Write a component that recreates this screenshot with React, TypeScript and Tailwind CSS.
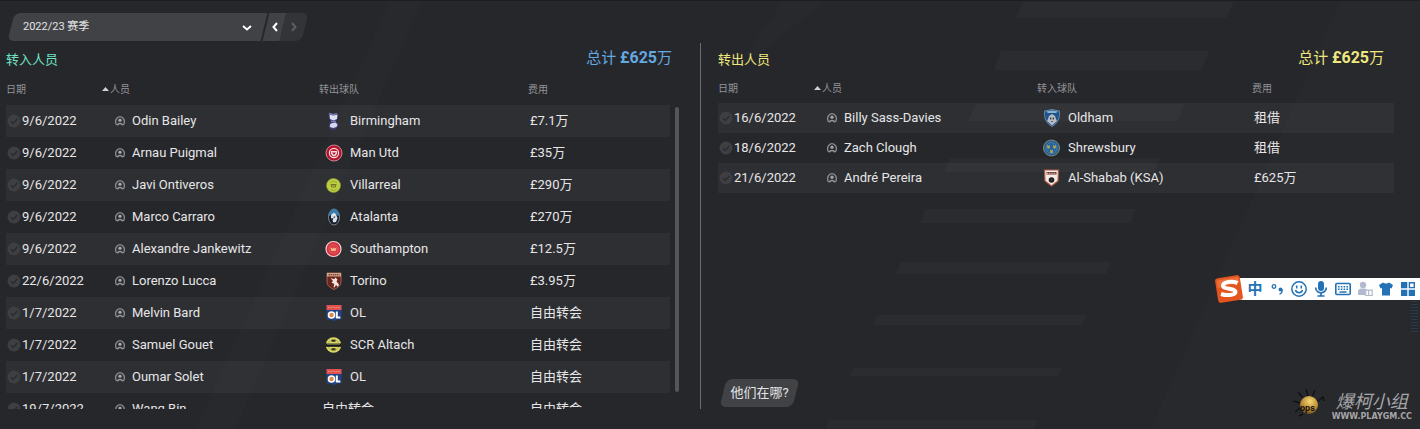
import React from 'react';

type Transfer = {
  date: string;
  player: string;
  club: string;
  crest?: string;
  fee: string;
};

const transfersIn: Transfer[] = [
  { date: '9/6/2022', player: 'Odin Bailey', club: 'Birmingham', crest: 'birmingham', fee: '£7.1万' },
  { date: '9/6/2022', player: 'Arnau Puigmal', club: 'Man Utd', crest: 'manutd', fee: '£35万' },
  { date: '9/6/2022', player: 'Javi Ontiveros', club: 'Villarreal', crest: 'villarreal', fee: '£290万' },
  { date: '9/6/2022', player: 'Marco Carraro', club: 'Atalanta', crest: 'atalanta', fee: '£270万' },
  { date: '9/6/2022', player: 'Alexandre Jankewitz', club: 'Southampton', crest: 'southampton', fee: '£12.5万' },
  { date: '22/6/2022', player: 'Lorenzo Lucca', club: 'Torino', crest: 'torino', fee: '£3.95万' },
  { date: '1/7/2022', player: 'Melvin Bard', club: 'OL', crest: 'lyon', fee: '自由转会' },
  { date: '1/7/2022', player: 'Samuel Gouet', club: 'SCR Altach', crest: 'altach', fee: '自由转会' },
  { date: '1/7/2022', player: 'Oumar Solet', club: 'OL', crest: 'lyon', fee: '自由转会' },
  { date: '19/7/2022', player: 'Wang Bin', club: '自由转会', fee: '自由转会' },
];

const transfersOut: Transfer[] = [
  { date: '16/6/2022', player: 'Billy Sass-Davies', club: 'Oldham', crest: 'oldham', fee: '租借' },
  { date: '18/6/2022', player: 'Zach Clough', club: 'Shrewsbury', crest: 'shrewsbury', fee: '租借' },
  { date: '21/6/2022', player: 'André Pereira', club: 'Al-Shabab (KSA)', crest: 'alshabab', fee: '£625万' },
];

const crests: Record<string, React.ReactNode> = {
  birmingham: (
    <>
      <path d="M4.500 1.500l5 1 4.500-.5-.5 6-2 2 2.500 2 .5 3-3 3.500-4 .5-3-2.500.5-4 1.500-2.500-1.500-2z" fill="#3c3e6e" />
      <path d="M5.500 3.500l3.500 1 4.500-.8-.5 4.300-3.500 1.500L6 8z" fill="#dde1f4" />
      <path d="M6 13.500l2-1.500 3.500-.5 2 2-1 2.500-3.500 1-3-1z" fill="#d5d9f0" />
      <path d="M5 2.500l4 1 4-.8M7 10.300h5" stroke="#8f95c6" strokeWidth=".9" fill="none" />
    </>
  ),
  manutd: (
    <>
      <circle cx="10" cy="10" r="8" fill="#b3142c" stroke="#d9a0a8" strokeWidth=".8" />
      <circle cx="10" cy="10" r="4.600" fill="#c21d35" stroke="#f5dfe0" strokeWidth="1.200" />
      <path d="M7 8h6v2.500l-1.200 2L10 13.500l-1.800-1L7 10.500z" fill="#f2dcdc" />
      <path d="M8 9.500h4l-2 2.500z" fill="#b3142c" />
    </>
  ),
  villarreal: (
    <>
      <circle cx="9.500" cy="10.500" r="7" fill="#bccf43" stroke="#90a02f" strokeWidth=".6" />
      <path d="M6.500 9h6l-.8 3.500H7.300z" fill="#70771f" />
      <path d="M7.500 10l2 .8 2-.8-.5 1.800h-3z" fill="#b5b548" />
      <path d="M6 7.500l3.500-1.500L13 7.500M6.500 14.500c2 1.200 4 1.200 6 0" stroke="#98a935" fill="none" />
    </>
  ),
  atalanta: (
    <>
      <ellipse cx="10" cy="10" rx="5.500" ry="8" fill="#161c28" stroke="#8a9cab" strokeWidth=".8" />
      <path d="M4.800 9a5.200 7 0 0110.400 0l-3-1H7z" fill="#3a7cad" />
      <path d="M7 8l3-2.500 2 2 1.500 3.500-1.500 4-2.500.5-1-2 1-2.500-2.500.5z" fill="#dbe3e8" />
      <path d="M10 9l1.500.8-.8 1.500-1.500-.8z" fill="#5b6e80" />
    </>
  ),
  southampton: (
    <>
      <circle cx="9.500" cy="10" r="7.500" fill="#d3303b" stroke="#f0d4d4" strokeWidth="1.200" />
      <circle cx="9.500" cy="10" r="4.800" fill="#dc4148" stroke="#e0686b" strokeWidth=".6" />
      <path d="M6.500 8.500l2 1 1-1 1 1 2-1-.8 3.500H7.300z" fill="#f2b08a" />
    </>
  ),
  torino: (
    <>
      <path d="M3 2h14v9c0 4-4 6-7 7.500C7 17 3 15 3 11z" fill="#6b231d" stroke="#b9755d" strokeWidth=".8" />
      <path d="M3 2h14v3.500H3z" fill="#d3a88c" />
      <path d="M4.500 3.800h11" stroke="#542018" strokeWidth="1" strokeDasharray="1.500 .6" />
      <path d="M6.500 7l3.500 1.200 1.500-1.700 2 2-1 2 2.500 3-1 2.500-2-2-1.500 2.500-1-.5.8-3-2.800-1.500L9 10z" fill="#f3e6df" />
    </>
  ),
  lyon: (
    <>
      <path d="M2.500 2h15v14.500h-5L10 18.500 7.500 16.500h-5z" fill="#1f4386" />
      <path d="M2.500 2h15v5h-15z" fill="#e0524f" />
      <path d="M4 4.500h12" stroke="#ef8a83" strokeWidth="1.200" strokeDasharray="1.500 1" />
      <circle cx="7.500" cy="12" r="3" fill="#dc8a4a" stroke="#fff" strokeWidth="1.600" />
      <path d="M12.800 8.500v6h3.500" stroke="#fff" strokeWidth="2" fill="none" />
    </>
  ),
  altach: (
    <>
      <circle cx="9.500" cy="10" r="7.800" fill="#dad866" />
      <circle cx="9.500" cy="10" r="5.500" fill="none" stroke="#a3a245" strokeWidth=".8" />
      <path d="M7.500 5.800h4M7.500 14.200h4" stroke="#333417" strokeWidth="2" />
      <path d="M1.500 8.400h16v3.400h-16z" fill="#16171a" />
      <path d="M3 9h13" stroke="#c9c873" strokeWidth=".8" />
    </>
  ),
  oldham: (
    <>
      <path d="M10 1.500l7.500 1.500c.5 8-2 12.500-7.500 15.500C4.500 15.500 2 11 2.500 3z" fill="#1d548d" stroke="#7596b5" strokeWidth=".8" />
      <path d="M4 3.500l6-1 6 1-2 1.500H6z" fill="#88b2cf" />
      <path d="M10 6l3 2 1 3 1 2-5 4.500L5 13l1-2 1-3z" fill="#b9bcc0" />
      <path d="M8 9.500h1.300v2H8zM10.700 9.500H12v2h-1.300zM9 13h2l-1 1.500z" fill="#343b45" />
    </>
  ),
  shrewsbury: (
    <>
      <circle cx="9.500" cy="10" r="8" fill="#2a5f8f" stroke="#7c8a78" strokeWidth="1" />
      <circle cx="9.500" cy="10" r="5.500" fill="#2265a0" stroke="#6491a8" strokeWidth=".6" />
      <path d="M5 7l1.500 1L8 7l-.5 3.500h-2zM11 7l1.500 1L14 7l-.5 3.500h-2zM8 11.500l1.500 1 1.500-1-.5 3.500h-2z" fill="#c7aa48" />
    </>
  ),
  alshabab: (
    <>
      <path d="M2.500 2h14l-.5 11-6.500 5L3 13z" fill="#f3ebe6" stroke="#ae5945" strokeWidth="1.200" />
      <path d="M4.500 4h10v2.500h-10z" fill="#6d352c" />
      <path d="M5 5.300h9" stroke="#efe5df" strokeWidth="1" strokeDasharray="1 .8" />
      <circle cx="9.500" cy="12" r="2.800" fill="#201c1c" />
      <circle cx="9.500" cy="12" r=".8" fill="#3e5a54" />
    </>
  ),
};

const Crest: React.FC<{ name: string }> = ({ name }) => (
  <svg viewBox="0 0 20 20" className="w-5 h-5 shrink-0" aria-hidden="true">
    {crests[name]}
  </svg>
);

const CheckBadge = () => (
  <svg viewBox="0 0 14 14" className="w-3.5 h-3.5 shrink-0" aria-hidden="true">
    <circle cx="7" cy="7" r="6.500" fill="#3e3f43" />
    <path d="M4 7.300l2.200 2.200L10.300 5" fill="none" stroke="#2a2b2f" strokeWidth="1.400" />
  </svg>
);

const PlayerIcon = () => (
  <svg viewBox="0 0 10 10" className="w-2.5 h-2.5 shrink-0" aria-hidden="true">
    <path d="M1.500 9C-.8 4.500 2 .7 5 .7S10.800 4.500 8.500 9" fill="none" stroke="#8d8e91" strokeWidth="1.300" />
    <circle cx="5" cy="4.200" r="1.700" fill="#a0a1a3" />
    <path d="M1.500 9.200C2.300 7.500 3.500 6.800 5 6.800s2.700.7 3.500 2.400L7 9.500a2.300 2.300 0 00-4 0z" fill="#97989b" />
  </svg>
);

// faint parallelograms and diagonal bands behind the panels
const Backdrop = () => (
  <svg
    viewBox="0 0 1420 429"
    preserveAspectRatio="xMaxYMin slice"
    className="absolute inset-0 -z-10 w-full h-full"
    aria-hidden="true"
  >
    <g fill="#fff" fillOpacity=".01">
      <path d="M390 0h32L235 429h-40z" />
      <path d="M783 0h42l-66 54h-14z" />
      <path d="M1340 0h80v429h-270z" />
    </g>
    <g fill="#fff" fillOpacity=".025">
      <path d="M1022 1h212l-8 16h-210z" />
      <path d="M1001 50h208l-7 19H994z" />
      <path d="M976 103h208l-6 17H968z" />
      <path d="M950 157h210l-6 14H944z" />
      <path d="M925 208h210l-4 14H921z" />
      <path d="M901 261h210l-5 12H896z" />
      <path d="M877 314h209l-4 10H873z" />
      <path d="M853 367h209l-4 8H850z" />
      <path d="M829 419h209l-4 8H826z" />
    </g>
  </svg>
);

const TransferTable: React.FC<{
  label: string;
  clubHeading: string;
  rows: Transfer[];
  rowClass: string;
}> = ({ label, clubHeading, rows, rowClass }) => (
  <table className="w-full table-fixed border-collapse text-left" aria-label={label}>
    <colgroup>
      <col className="w-24" />
      <col />
      <col />
      <col className="w-[142px]" />
    </colgroup>
    <thead className="text-[10px] text-[#939497]">
      <tr className={rowClass}>
        <th className="p-0 font-normal">日期</th>
        <th className="p-0 font-normal" aria-sort="ascending">
          <button type="button" className="flex items-center gap-px">
            <svg viewBox="0 0 7 4" className="w-[7px] h-1" aria-hidden="true">
              <path d="M3.500 0L7 4H0z" fill="#d0d0d2" />
            </svg>
            人员
          </button>
        </th>
        <th className="p-0 pl-1 font-normal">{clubHeading}</th>
        <th className="p-0 font-normal">费用</th>
      </tr>
    </thead>
    <tbody className="text-[13px] text-[#e6e6e7]">
      {rows.map((row, index) => (
        <tr key={index} className={`${rowClass} odd:bg-white/[0.04]`}>
          <td className="p-0">
            <div className="flex items-center gap-px pl-px">
              <CheckBadge />
              <span>{row.date}</span>
            </div>
          </td>
          <td className="p-0">
            <div className="flex items-center gap-[7px] pl-[13px]">
              <PlayerIcon />
              <span className="whitespace-nowrap">{row.player}</span>
            </div>
          </td>
          <td className="p-0">
            {row.crest ? (
              <div className="flex items-center gap-1.5 pl-[9px]">
                <Crest name={row.crest} />
                <span className="whitespace-nowrap">{row.club}</span>
              </div>
            ) : (
              <div className="pl-[7px]">{row.club}</div>
            )}
          </td>
          <td className="p-0 pl-0.5">{row.fee}</td>
        </tr>
      ))}
    </tbody>
  </table>
);

const SeasonPicker = () => (
  <div className="flex gap-0.5 h-7 pl-[11px]">
    <div className="relative isolate w-[253px] before:absolute before:inset-0 before:-z-10 before:-skew-x-[14deg] before:rounded-l-md before:bg-[#414246]">
      <select
        aria-label="赛季"
        className="w-full h-full appearance-none bg-transparent p-0 pl-3 text-[11px] text-[#e4e4e5] outline-none"
      >
        <option>2022/23 赛季</option>
      </select>
      <svg viewBox="0 0 10 6" className="pointer-events-none absolute right-3 top-3 w-2.5 h-1.5" aria-hidden="true">
        <path d="M1 1l4 3.500L9 1" fill="none" stroke="#fff" strokeWidth="2" />
      </svg>
    </div>
    <button
      type="button"
      aria-label="上一赛季"
      className="relative isolate flex w-[17px] items-center justify-center before:absolute before:inset-0 before:-z-10 before:-skew-x-[14deg] before:bg-[#414246]"
    >
      <svg viewBox="0 0 6 10" className="w-1.5 h-2.5" aria-hidden="true">
        <path d="M5 1L1.500 5 5 9" fill="none" stroke="#fff" strokeWidth="2" />
      </svg>
    </button>
    <button
      type="button"
      aria-label="下一赛季"
      disabled
      className="relative isolate -ml-0.5 flex w-[22px] items-center justify-center before:absolute before:inset-0 before:-z-10 before:-skew-x-[14deg] before:rounded-r-md before:bg-[#333438]"
    >
      <svg viewBox="0 0 6 10" className="w-1.5 h-2.5" aria-hidden="true">
        <path d="M1 1l3.500 4L1 9" fill="none" stroke="#5d5e62" strokeWidth="2" />
      </svg>
    </button>
  </div>
);

// floating input method toolbar
const ImeBar = () => (
  <div className="absolute right-0 top-[274px] flex h-7 items-center">
    <svg viewBox="0 0 30 30" className="relative -mr-4 w-[30px] h-[30px]" aria-hidden="true">
      <rect x="2.500" y="2.500" width="25" height="25" rx="3" fill="#e4541f" transform="rotate(-9 15 15)" />
      <path d="M3 6.500L24 3l1.500 5.500L4 14z" fill="#f08350" fillOpacity=".6" />
      <path
        d="M23.500 9C18 7 9.500 7.500 9 11.500c-.5 4 12.500 2.500 12.500 6.300 0 3.700-9 4-14.500 2.200"
        fill="none"
        stroke="#fff"
        strokeWidth="4"
      />
    </svg>
    <div className="flex h-[22px] items-center bg-white pl-4 text-[#2272b5]">
      <button type="button" className="w-[22px] text-[15px] leading-none font-bold">中</button>
      <button type="button" aria-label="标点" className="flex w-[22px] justify-center">
        <svg viewBox="0 0 14 14" className="w-3.5 h-3.5">
          <circle cx="4" cy="4.500" r="1.800" fill="none" stroke="currentColor" strokeWidth="1.300" />
          <circle cx="10.500" cy="7.500" r="1.900" fill="currentColor" />
          <path d="M12.300 7.500c.2 2.500-1 4-2.800 4.700" fill="none" stroke="currentColor" strokeWidth="1.300" />
        </svg>
      </button>
      <button type="button" aria-label="表情" className="flex w-[22px] justify-center">
        <svg viewBox="0 0 16 16" className="w-4 h-4" fill="none" stroke="currentColor" strokeWidth="1.500">
          <circle cx="8" cy="8" r="7.200" />
          <path d="M4.500 9c1 3.500 6 3.500 7 0M5.700 4.500v3M10.300 4.500v3" />
        </svg>
      </button>
      <button type="button" aria-label="语音" className="flex w-[22px] justify-center">
        <svg viewBox="0 0 14 16" className="w-3.5 h-4">
          <rect x="4" y="0" width="6" height="10" rx="3" fill="currentColor" />
          <path d="M1.700 6.500c0 7 10.600 7 10.600 0M7 12v3M3.500 15h7" fill="none" stroke="currentColor" strokeWidth="1.700" />
        </svg>
      </button>
      <button type="button" aria-label="键盘" className="flex w-[22px] justify-center">
        <svg viewBox="0 0 16 14" className="w-4 h-3.5">
          <rect x=".8" y="1.500" width="14.400" height="11" rx="1" fill="none" stroke="currentColor" strokeWidth="1.600" />
          <path d="M3 4.800h10M3 7.300h10" stroke="currentColor" strokeWidth="1.500" strokeDasharray="1.600 1.200" />
          <path d="M4.500 10h7" stroke="currentColor" strokeWidth="1.500" />
        </svg>
      </button>
      <button type="button" aria-label="账户" className="flex w-[22px] justify-center text-[#b3bad0]">
        <svg viewBox="0 0 16 16" className="w-4 h-4">
          <circle cx="6" cy="4" r="3.200" fill="currentColor" />
          <path d="M1 14V10.500C1 8 3 7.500 6 7.500s4 .5 4.500 1.500H8v5z" fill="currentColor" />
          <path d="M8.700 9.200h3v5.300h-3zM11.700 9.200h3.500v5.300h-3.500z" fill="#fff" stroke="currentColor" strokeWidth="1.200" />
        </svg>
      </button>
      <button type="button" aria-label="皮肤" className="flex w-5 justify-center">
        <svg viewBox="0 0 14 14" className="w-3.5 h-3.5">
          <path d="M4 .5c1.500 1.300 4.500 1.300 6 0l4 2.500-1.500 3.500-1.500-.5v7.500H3V6l-1.500.5L0 3z" fill="currentColor" />
        </svg>
      </button>
      <button type="button" aria-label="工具箱" className="flex w-6 justify-center">
        <svg viewBox="0 0 14 14" className="w-3.5 h-3.5">
          <path d="M0 0h6.300v6.300H0zM0 7.700h6.300V14H0zM7.700 7.700H14V14H7.700z" fill="currentColor" />
          <path d="M8.400.7h4.900v4.900H8.400z" fill="none" stroke="currentColor" strokeWidth="1.400" />
        </svg>
      </button>
    </div>
  </div>
);

const Watermark = () => (
  <div className="absolute bottom-2 right-2 flex items-end gap-1 text-[#a5a6a8]">
    <svg viewBox="0 0 38 34" className="w-[38px] h-[34px]" aria-hidden="true">
      <defs>
        <radialGradient id="bug" cx=".55" cy=".3" r=".8">
          <stop offset="0" stopColor="#f3d777" />
          <stop offset=".6" stopColor="#b98a2f" />
          <stop offset="1" stopColor="#4a3616" />
        </radialGradient>
      </defs>
      <path
        d="M13 11L8 5M18 9l-2-7M22 10l3-7M27 15l6-5 1 4M10 16l-7-2M10 21l-5 4M13 27l-4 2"
        stroke="#111214"
        strokeWidth="1.500"
        fill="none"
      />
      <circle cx="19" cy="18" r="9" fill="url(#bug)" />
      <text x="10" y="24" fontSize="9" fontWeight="700" fill="#111" fontFamily="Roboto, sans-serif">ops</text>
    </svg>
    <div className="flex flex-col items-center">
      <span className="font-['Liberation_Serif','Noto_Sans_CJK_SC',serif] text-lg leading-5 italic">爆柯小组</span>
      <span className="font-['DejaVu_Sans',sans-serif] text-[8px] leading-[9px] font-bold">WWW.PLAYGM.CC</span>
    </div>
  </div>
);

const App: React.FC = () => {
  return (
    <div className="relative isolate flex h-screen flex-col overflow-hidden border-t border-[#1d1e21] bg-[#26272b] pt-3 pb-5 font-[Roboto,'Noto_Sans_CJK_SC',sans-serif]">
      <Backdrop />
      <SeasonPicker />

      <main className="mt-0.5 grid min-h-0 flex-1 grid-cols-[35fr_36fr]">
        {/* 转入 */}
        <section className="flex min-h-0 flex-col pl-1.5">
          <div className="flex h-[30px] shrink-0 items-center justify-between pr-7">
            <h2 className="pt-1 text-[13px] text-[#6fe3c5]">转入人员</h2>
            <p className="text-[15px] text-[#64a9e0]">
              总计 <b className="text-base">£625</b>万
            </p>
          </div>
          <div className="flex min-h-0 flex-1 gap-[5px] pr-[21px]">
            <div className="min-w-0 flex-1 overflow-hidden">
              <TransferTable label="转入人员" clubHeading="转出球队" rows={transfersIn} rowClass="h-8" />
            </div>
            <div className="mt-[34px] mb-[17px] w-1 rounded-full bg-[#55565a]" />
          </div>
        </section>

        {/* 转出 */}
        <section className="flex min-h-0 flex-col border-l border-[#6b6c6f] pl-[17px] pr-[26px]">
          <div className="flex h-[30px] shrink-0 items-center justify-between pr-2.5">
            <h2 className="pt-1 text-[13px] text-[#f0e87f]">转出人员</h2>
            <p className="text-[15px] text-[#f0e87f]">
              总计 <b className="text-base">£625</b>万
            </p>
          </div>
          <TransferTable label="转出人员" clubHeading="转入球队" rows={transfersOut} rowClass="h-[30px]" />
          <button
            type="button"
            className="relative isolate mt-auto mb-0.5 ml-[5px] h-7 w-[73px] self-start text-[13px] text-[#e4e4e5] before:absolute before:inset-0 before:-z-10 before:-skew-x-[14deg] before:rounded-md before:bg-[#414246]"
          >
            他们在哪?
          </button>
        </section>
      </main>

      <div className="absolute right-0.5 top-[300px] h-8 w-[7px] bg-[repeating-linear-gradient(#2f3a48_0_1px,#23272e_1px_3px)]" />
      <ImeBar />
      <Watermark />
    </div>
  );
};

export default App;
